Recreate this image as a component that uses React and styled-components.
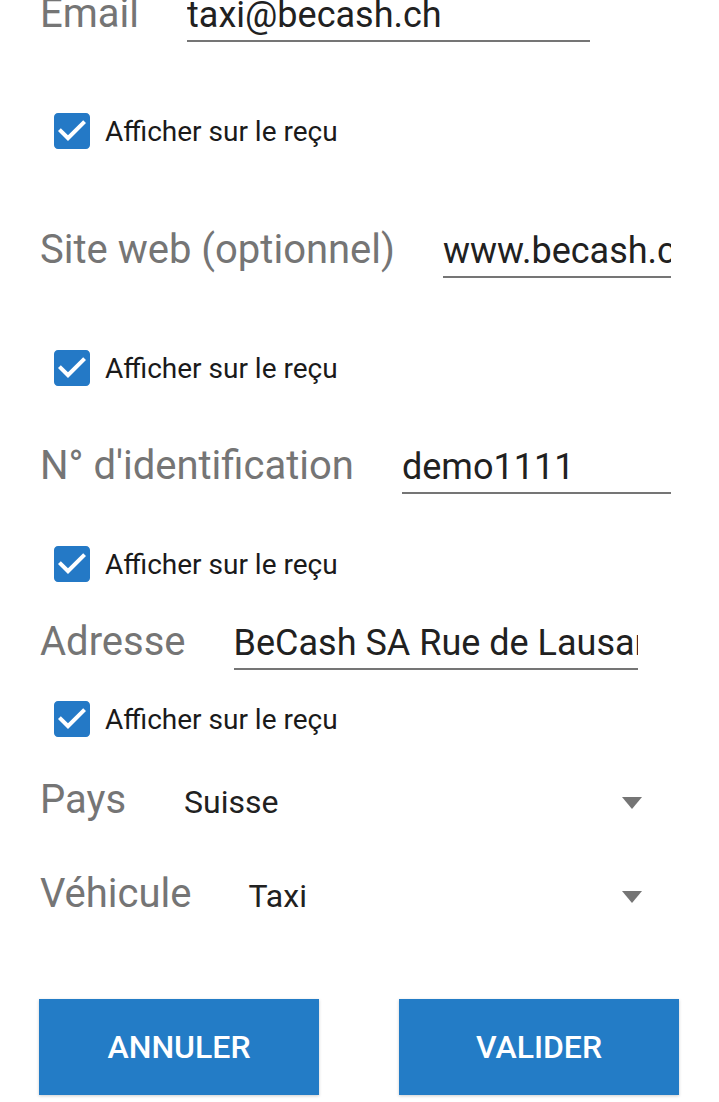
import React from 'react'
import styled, { createGlobalStyle } from 'styled-components'

const GlobalStyle = createGlobalStyle`
  html, body {
    margin: 0;
    padding: 0;
    background: #ffffff;
  }
  body {
    font-family: Roboto, "Liberation Sans", sans-serif;
    overflow: hidden;
  }
`

const Screen = styled.div`
  width: 719px;
  height: 1102px;
  overflow: hidden;
  background: #ffffff;
`

// the form is scrolled a little: the first row is cut by the top edge
const Form = styled.div`
  display: flex;
  flex-direction: column;
  margin-top: -10px;
`

const FieldRow = styled.div`
  display: flex;
  align-items: baseline;
  padding-left: 40px;
  padding-right: ${props => props.right}px;
  margin-top: ${props => props.top || 0}px;
`

const Label = styled.span`
  flex: none;
  font-size: 40px;
  line-height: 48px;
  color: #757575;
  white-space: nowrap;
`

const TextInput = styled.input`
  flex: 1;
  min-width: 0;
  margin-left: 48px;
  height: 48px;
  box-sizing: border-box;
  padding: 0 0 4px;
  border: none;
  border-bottom: 2px solid #757575;
  border-radius: 0;
  outline: none;
  background: transparent;
  font-family: Roboto, "Liberation Sans", sans-serif;
  font-size: 36px;
  color: #212121;
`

const CheckRow = styled.label`
  display: flex;
  align-items: center;
  gap: 9px;
  padding-left: 48px;
  height: 36px;
  margin-top: ${props => props.top || 0}px;
  font-size: 28px;
  color: #1a1a1a;
  cursor: pointer;
`

const CheckIcon = styled.svg`
  width: 48px;
  height: 48px;
  flex: none;
`

const SelectRow = styled.div`
  display: flex;
  align-items: baseline;
  padding-left: 40px;
  padding-right: 77px;
  margin-top: ${props => props.top || 0}px;
`

const SelectValue = styled.span`
  margin-left: ${props => props.gap}px;
  font-size: 32px;
  color: #212121;
`

const Arrow = styled.svg`
  margin-left: auto;
  align-self: center;
  margin-top: 6px;
  width: 20px;
  height: 12px;
`

const Buttons = styled.div`
  display: flex;
  gap: 80px;
  padding-left: 39px;
  margin-top: 81px;
`

const Button = styled.button`
  width: 280px;
  height: 96px;
  border: none;
  border-radius: 0;
  background: #237cc6;
  color: #ffffff;
  font-family: Roboto, "Liberation Sans", sans-serif;
  font-size: 32px;
  font-weight: 500;
  text-transform: uppercase;
  box-shadow: 0 1px 3px rgba(0, 0, 0, 0.2);
  cursor: pointer;
`

const Checkbox = ({ top }) => (
  <CheckRow top={top}>
    <CheckIcon viewBox="0 0 24 24">
      <path
        fill="#2479c6"
        d="M19 3H5c-1.11 0-2 .9-2 2v14c0 1.1.89 2 2 2h14c1.11 0 2-.9 2-2V5c0-1.1-.89-2-2-2zm-9 14l-5-5 1.41-1.41L10 14.17l7.59-7.59L19 8l-9 9z"
      />
    </CheckIcon>
    Afficher sur le reçu
  </CheckRow>
)

const Field = ({ label, value, top, right }) => (
  <FieldRow top={top} right={right}>
    <Label>{label}</Label>
    <TextInput readOnly value={value} />
  </FieldRow>
)

const Select = ({ label, value, top, gap }) => (
  <SelectRow top={top}>
    <Label>{label}</Label>
    <SelectValue gap={gap}>{value}</SelectValue>
    <Arrow viewBox="0 0 20 12">
      <path fill="#757575" d="M0 0h20L10 12z" />
    </Arrow>
  </SelectRow>
)

export default function App() {
  return (
    <Screen>
      <GlobalStyle />
      <Form>
        <Field label="Email" value="taxi@becash.ch" right={129} />
        <Checkbox top={71} />
        <Field label="Site web (optionnel)" value="www.becash.ch" top={77} right={48} />
        <Checkbox top={72} />
        <Field label="N° d'identification" value="demo1111" top={56} right={48} />
        <Checkbox top={52} />
        <Field label="Adresse" value="BeCash SA Rue de Lausanne 15, 1950 Sion" top={36} right={81} />
        <Checkbox top={31} />
        <Select label="Pays" value="Suisse" top={39} gap={58} />
        <Select label="Véhicule" value="Taxi" top={46} gap={57} />
        <Buttons>
          <Button>Annuler</Button>
          <Button>Valider</Button>
        </Buttons>
      </Form>
    </Screen>
  )
}
